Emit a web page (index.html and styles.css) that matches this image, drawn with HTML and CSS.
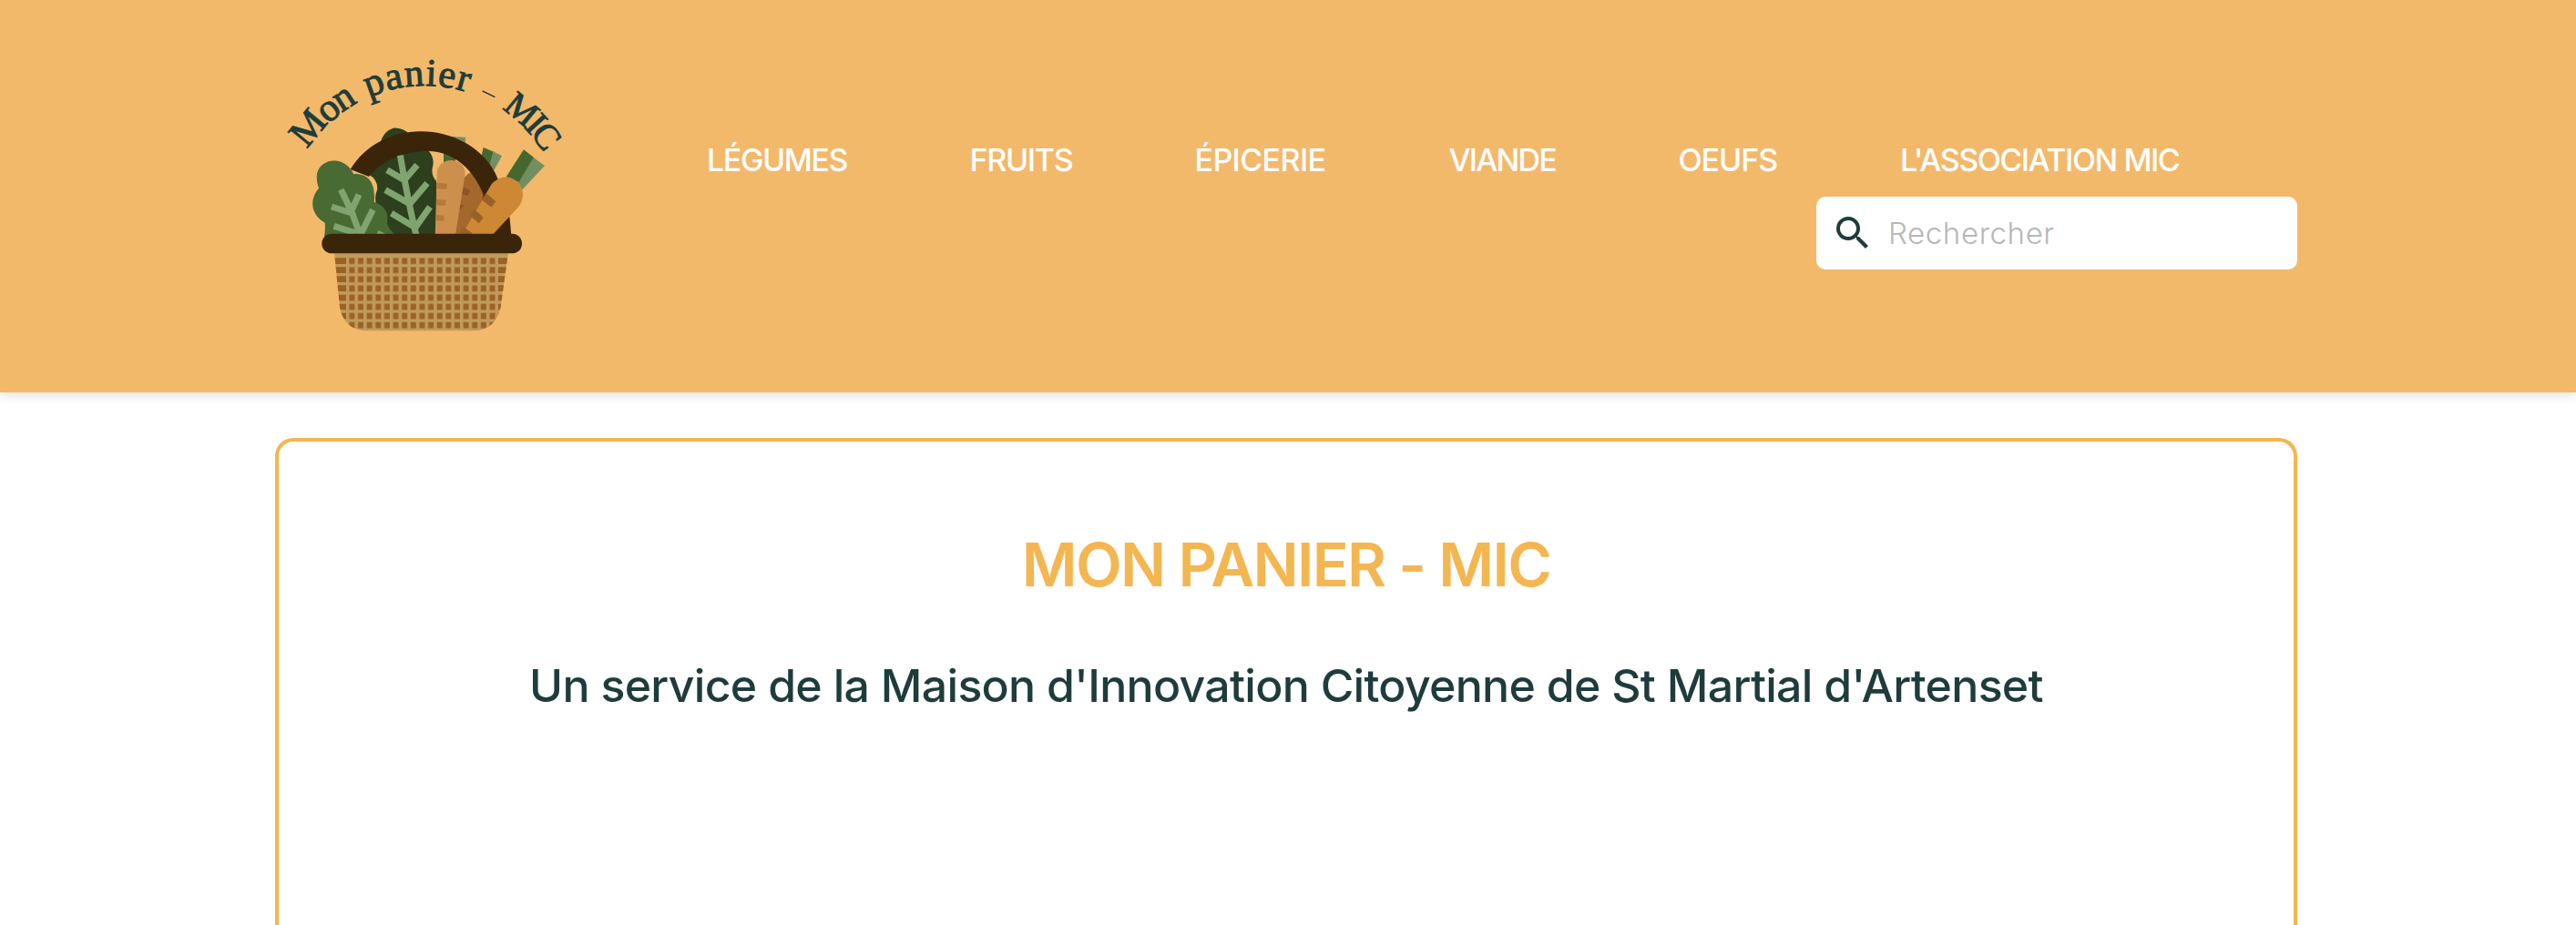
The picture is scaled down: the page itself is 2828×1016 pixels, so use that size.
FILE: index.html
```html
<!DOCTYPE html>
<html lang="fr">
<head>
<meta charset="utf-8">
<title>Mon panier - MIC</title>
<link rel="stylesheet" href="styles.css">
</head>
<body>
<header class="header">
  <a class="logo">
    <svg class="logo-art" viewBox="0 0 1020 990" role="img" aria-label="Mon panier – MIC">
      <defs>
        <path id="arc" d="M143 343A457 457 0 0 1 985 589"/>
        <clipPath id="produce"><path d="M0 0H1020V640H0Z"/></clipPath>
        <clipPath id="basket"><path d="M231 680H804L779 862Q762 935 697 940H332Q262 935 249 862Z"/></clipPath>
        <pattern id="weave" x="278" y="699" width="28.9" height="30.2" patternUnits="userSpaceOnUse">
          <rect x="2" y="1" width="18" height="20" fill="#9a6223"/>
        </pattern>
      </defs>
      <text class="logo-text"><textPath href="#arc"><tspan class="word-mon">Mon </tspan><tspan class="word-panier" x="268">panier </tspan><tspan class="dash" x="644">– </tspan><tspan class="word-mic" x="726">MIC</tspan></textPath></text>
      <g clip-path="url(#produce)">
        <path fill="#2d401e" d="M383 320Q392 282 425 272Q458 270 478 292L540 346Q560 365 556 395Q547 425 567 447V630H430L385 570Q355 510 373 470Q372 440 345 425Z"/>
        <path fill="#f3b96b" d="M348 428Q362 440 370 458Q376 475 365 492L350 470L335 432Z"/>
        <path fill="#46672f" d="M591 300H630V390H591Z"/>
        <path fill="#728f61" d="M612 300L663 302L662 330L640 345Z"/>
        <path fill="#46672f" d="M722 336L756 350L752 400L712 380Z"/>
        <path fill="#728f61" d="M754 349L783 364L757 412L742 395Z"/>
        <path fill="#a5682c" d="M656 440Q672 416 690 418L735 490L690 630H626Z"/>
        <path fill="#8c5526" d="M658 467L679 478L670 496L650 488ZM642 523L656 525L652 538L641 543Z"/>
        <path fill="#cd8f4c" d="M569 424C569 363 662 363 662 424L629 630H563Z"/>
        <path fill="#b87837" d="M568 452L603 455L601 474L567 472ZM567 507L599 509L596 528L566 526ZM566 558L593 560L591 579L565 576Z"/>
        <path fill="#3b250a" d="M284 408C335 325 425 283 515 283C635 283 735 350 770 440C800 500 812 560 814 640H690L722 492C685 395 610 348 540 348C460 348 395 375 345 432Z"/>
        <path fill="#46672f" d="M855 343L889 370L850 455L797 433Z"/>
        <path fill="#728f61" d="M887 369L924 396L849 476L836 455Z"/>
        <path fill="#ce8733" d="M750 455C780 425 812 430 832 447C858 469 858 510 835 535L735 642H640Z"/>
        <path fill="#99612a" d="M731 487L763 514L748 533L716 508ZM692 539L722 567L707 586L676 559ZM654 596L686 618L680 632H640Z"/>
        <path fill="#486b33" d="M198 630Q202 600 200 584C150 555 150 505 180 470C155 400 205 375 240 380C270 384 290 410 294 423C345 420 368 455 362 515Q403 530 407 565C398 602 425 612 435 630Z"/>
        <g class="veins">
          <path d="M448 362Q475 520 502 630M405 410L457 441M504 394L458 448M399 476L477 520M537 454L475 527M419 553L492 596M546 532L492 608"/>
          <path d="M253 475L290 552L318 630M312 491L286 548M222 531L288 552M358 541L320 618M230 595L302 618M372 618L395 630"/>
        </g>
      </g>
      <path fill="#c09a5c" d="M231 680H804L779 862Q762 935 697 940H332Q262 935 249 862Z"/>
      <g clip-path="url(#basket)">
        <rect x="278" y="699" width="492" height="241" fill="url(#weave)"/>
        <path class="weave-edge" d="M230 710H270M230 740H270M230 770H270M230 800H270M230 831H270M230 861H270M230 891H270M230 921H270M771 710H810M771 740H810M771 770H810M771 800H810M771 831H810M771 861H810M771 891H810"/>
      </g>
      <rect x="190" y="620" width="659" height="65" rx="32" fill="#3b250a"/>
    </svg>
  </a>
  <div class="header-main">
    <nav class="nav">
      <a class="nav-link legumes">LÉGUMES</a>
      <a class="nav-link fruits">FRUITS</a>
      <a class="nav-link epicerie">ÉPICERIE</a>
      <a class="nav-link viande">VIANDE</a>
      <a class="nav-link oeufs">OEUFS</a>
      <a class="nav-link association">L'ASSOCIATION MIC</a>
    </nav>
    <div class="search">
      <svg class="search-icon" viewBox="0 0 24 24"><path d="M15.5 14h-.79l-.28-.27A6.47 6.47 0 0 0 16 9.5 6.5 6.5 0 1 0 9.5 16c1.61 0 3.09-.59 4.23-1.57l.27.28v.79l5 4.99L20.49 19zm-6 0C7.01 14 5 11.99 5 9.5S7.01 5 9.5 5 14 7.01 14 9.5 11.99 14 9.5 14"/></svg>
      <span class="search-text">Rechercher</span>
    </div>
  </div>
</header>
<main class="card">
  <h1 class="title">MON PANIER - MIC</h1>
  <p class="subtitle">Un service de la Maison d'Innovation Citoyenne de St Martial d'Artenset</p>
</main>
</body>
</html>
```
FILE: styles.css
```css
* { box-sizing: border-box; }
body {
  margin: 0;
  background: #fff;
  color: #1f3c3c;
  font-family: Inter, "Liberation Sans", sans-serif;
}
.header {
  display: flex;
  height: 431px;
  padding: 50px 306px 0 290px;
  background: #f3b96b;
  box-shadow: 0 2px 12px rgba(0, 0, 0, .15);
}
.logo { flex: none; width: 340px; }
.logo-art { display: block; width: 340px; height: 330px; }
.logo-text {
  font: 128px "Liberation Serif", serif;
  fill: #1f3c3c;
  stroke: #1f3c3c;
  stroke-width: 3px;
}
.word-mon { letter-spacing: -6px; }
.word-panier { letter-spacing: 2.5px; }
.dash { font-size: 90px; stroke: none; }
.word-mic { font-size: 118px; letter-spacing: -10px; }
.veins { fill: none; stroke: #80a46f; stroke-width: 21; }
.weave-edge { stroke: #9a6223; stroke-width: 20; }
.header-main { flex: 1; display: flex; flex-direction: column; }
.nav {
  display: grid;
  grid-template-columns: 288.5px 247px 279px 252px 243.5px 310px;
  height: 116px;
  margin: 50px 0 0 146px;
  padding-top: 56px;
}
.nav-link {
  color: #fff;
  font-size: 34px;
  font-weight: 500;
  line-height: 40px;
  white-space: nowrap;
}
.legumes { letter-spacing: -1.4px; }
.fruits { letter-spacing: -1.3px; }
.epicerie { letter-spacing: -.6px; }
.viande { letter-spacing: -1.8px; }
.oeufs { letter-spacing: -1px; }
.association { letter-spacing: -1.45px; }
.search {
  display: flex;
  align-items: center;
  align-self: flex-end;
  width: 528px;
  height: 80px;
  padding-left: 16px;
  border-radius: 10px;
  background: #fff;
}
.search-icon { width: 48px; height: 48px; fill: #1f3c3c; }
.search-text { margin-left: 15px; font-size: 33px; font-weight: 300; letter-spacing: .6px; color: #b7b7b7; }
.card {
  height: 535px;
  margin: 50px 306px 0 302px;
  padding-top: 95px;
  border: 4px solid #f4b650;
  border-bottom: 0;
  border-radius: 20px 20px 0 0;
  text-align: center;
}
.title { margin: 0; color: #f4b650; font-size: 66px; font-weight: 600; line-height: 80px; letter-spacing: -1.65px; }
.subtitle { margin: 63px 0 0; font-size: 50px; font-weight: 500; line-height: 60px; letter-spacing: -.7px; }
```
